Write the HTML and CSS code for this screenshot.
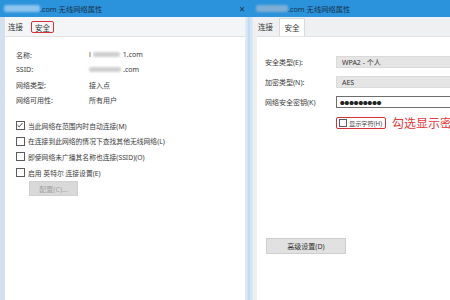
FILE: index.html
```html
<!DOCTYPE html>
<html>
<head>
  <title>无线网络属性</title>
  <link rel="stylesheet" href="styles.css">
</head>
<body>

<div class="screen">
  <header class="titlebar title-left">
    <span class="smudge smudge-title-left"></span>
    <span class="title">.com 无线网络属性</span>
    <span class="close">×</span>
  </header>
  <header class="titlebar title-right">
    <span class="smudge smudge-title-right"></span>
    <span class="title">.com 无线网络属性</span>
  </header>

  <!-- left dialog -->
  <div class="frame frame-left">
    <nav class="tabs">
      <span class="tab">连接</span>
      <span class="tab tab-marked">安全</span>
    </nav>
    <div class="panel panel-left">
      <div class="info">
        <span>名称:</span><span>l<span class="smudge smudge-val"></span>1.com</span>
        <span>SSID:</span><span><span class="smudge smudge-ssid"></span>.com</span>
        <span>网络类型:</span><span>接入点</span>
        <span>网络可用性:</span><span>所有用户</span>
      </div>
      <ul class="checks">
        <li><span class="box checked"><svg viewBox="0 0 8 8" width="8" height="8"><path d="M1.5 4.2 L3.2 5.8 L6.5 2" fill="none" stroke="#333" stroke-width="0.9"/></svg></span>当此网络在范围内时自动连接(M)</li>
        <li><span class="box"></span>在连接到此网络的情况下查找其他无线网络(L)</li>
        <li><span class="box"></span>即使网络未广播其名称也连接(SSID)(O)</li>
        <li><span class="box"></span>启用 英特尔 连接设置(E)</li>
      </ul>
      <button class="btn btn-off">配置(C)...</button>
    </div>
  </div>

  <div class="divider"></div>

  <!-- right dialog -->
  <div class="frame frame-right">
    <nav class="tabs">
      <span class="tab">连接</span>
      <span class="tab tab-active">安全</span>
    </nav>
    <div class="panel panel-right">
      <div class="form">
        <span class="label">安全类型(E):</span>
        <span class="field field-select">WPA2 - 个人</span>
        <span class="label">加密类型(N):</span>
        <span class="field field-select">AES</span>
        <span class="label">网络安全密钥(K)</span>
        <span class="field field-input"><span class="dots">●●●●●●●●●</span></span>
      </div>
      <div class="show-row">
        <span class="show-box"><span class="box small"></span>显示字符(H)</span>
        <span class="note">勾选显示密码</span>
      </div>
      <button class="btn btn-adv">高级设置(D)</button>
    </div>
  </div>
</div>

</body>
</html>
```

FILE: styles.css
```css
body { margin: 0; width: 450px; height: 300px; overflow: hidden; background: #fff; font-family: "Noto Sans", "Noto Sans CJK SC", sans-serif; font-size: 7px; color: #3c3c3c; }

.screen { display: grid; grid-template-columns: 245px 8px 197px; grid-template-rows: 17px 283px; }

.titlebar { display: flex; align-items: center; height: 17px; background: #2b93dc; color: #17324d; font-size: 7.3px; white-space: nowrap; overflow: hidden; }
.title-left { grid-column: 1 / 3; padding-left: 4px; }
.title-right { grid-column: 3; padding-left: 3px; }
.close { margin-left: auto; margin-right: 8px; font-size: 10px; color: #1c3550; }

.smudge { display: inline-block; filter: blur(1.2px); border-radius: 2px; }
.smudge-title-left { width: 36px; height: 7px; background: #8cc4ee; }
.smudge-title-right { width: 32px; height: 7px; background: #7eaed6; }
.smudge-val { width: 27px; height: 5px; background: #cfcfcf; margin: 0 3px 0 2px; }
.smudge-ssid { width: 32px; height: 5px; background: #cfcfcf; margin-right: 2px; }

.frame { display: flex; flex-direction: column; background: #f4f5f7; }
.frame-left { border-left: 5px solid #d3e1ee; box-shadow: inset 1px 0 0 #fbf5f8; }
.frame-right { padding-left: 4px; background: #eff0f2; }

.divider { background: linear-gradient(to right, #e4eef7 0, #cfe2f4 3px, #b9d4ee 4px, #cfe2f4 5px, #dfe9f3 8px); }

.tabs { display: flex; align-items: center; height: 19px; }
.frame-left .tabs { padding-left: 3px; gap: 8px; }
.frame-right .tabs { padding-left: 1px; gap: 6px; align-items: flex-end; }
.tab { font-size: 7.5px; color: #333; }
.frame-right .tab:first-child { margin-bottom: 4px; }
.tab-marked { display: flex; align-items: center; justify-content: center; width: 21px; height: 10px; border: 1.5px solid #d4303a; border-radius: 2px; margin-top: 1px; }
.tab-active { display: flex; align-items: center; justify-content: center; width: 24px; height: 17px; background: #fff; border: 1px solid #dadada; border-bottom: none; }

.panel { flex: 1; background: #fff; border-top: 1px solid #e2e2e2; }
.panel-left { padding: 10px 0 0 11px; }
.panel-right { padding: 19px 0 0 8px; }

.info { display: grid; grid-template-columns: 73px 1fr; grid-auto-rows: 15px; align-items: center; color: #3a3a3a; }
.info span { display: flex; align-items: center; }

.checks { list-style: none; margin: 11px 0 0; padding: 0; font-size: 6.8px; }
.checks li { display: flex; align-items: center; height: 15.6px; color: #3a3a3a; }
.box { display: inline-flex; width: 7px; height: 7px; border: 1px solid #5a5a5a; margin-right: 3px; background: #fff; }
.box svg { margin: -1px; }

.btn { font-family: inherit; font-size: 7px; border: 1px solid #cfcfcf; padding: 0; }
.btn-off { display: block; margin: 1px 0 0 13px; width: 49px; height: 15px; background: #d9d9d9; color: #a3a3a3; }
.btn-adv { display: block; margin: 106px 0 0 1px; width: 80px; height: 16px; background: #e1e1e1; color: #333; }

.form { display: grid; grid-template-columns: 71px 160px; grid-auto-rows: 12px; row-gap: 8px; align-items: center; }
.label { color: #3a3a3a; }
.field { display: flex; align-items: center; height: 12px; box-sizing: border-box; padding-left: 5px; color: #333; }
.field-select { background: #e5e5e5; border: 1px solid #dadada; }
.field-input { background: #fff; border: 1px solid #6e6e6e; padding-left: 3px; }
.dots { font-size: 4.6px; letter-spacing: 0; color: #222; }

.show-row { display: flex; align-items: center; margin: 6px 0 0 71px; white-space: nowrap; }
.show-box { display: flex; align-items: center; height: 10px; padding: 0 3px 0 2px; border: 1.5px solid #d4303a; border-radius: 2px; font-size: 6.2px; color: #444; }
.box.small { width: 6px; height: 6px; margin-right: 2px; }
.note { margin-left: 6px; font-size: 12px; color: #df3a40; }
```
